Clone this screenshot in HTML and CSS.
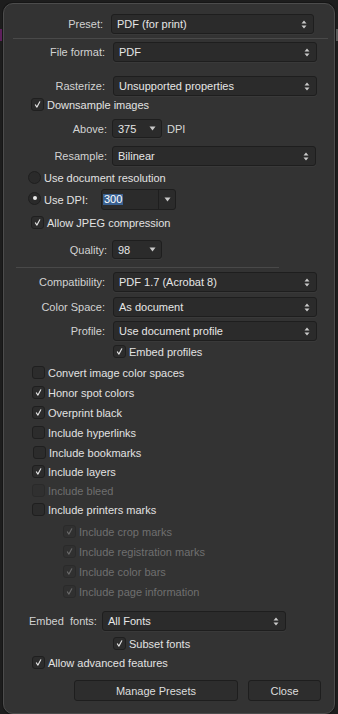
FILE: index.html
```html
<!DOCTYPE html>
<html>
<head>
<meta charset="utf-8">
<link rel="stylesheet" href="styles.css">
</head>
<body>
<div class="panel">
  <div class="row r-preset">
    <span class="lbl lbl-preset">Preset:</span>
    <div class="select sel-preset"><span>PDF (for print)</span>
      <svg class="stepper" width="6" height="11" viewBox="0 0 6 11"><path d="M0.5 4.5 L3 1.5 L5.5 4.5Z M0.5 6.5 L3 9.5 L5.5 6.5Z"/></svg></div>
  </div>
  <div class="sep sep-top"></div>
  <div class="row mt3">
    <span class="lbl">File format:</span>
    <div class="select sel-wide"><span>PDF</span>
      <svg class="stepper" width="6" height="11" viewBox="0 0 6 11"><path d="M0.5 4.5 L3 1.5 L5.5 4.5Z M0.5 6.5 L3 9.5 L5.5 6.5Z"/></svg></div>
  </div>
  <div class="row mt14">
    <span class="lbl">Rasterize:</span>
    <div class="select sel-wide"><span>Unsupported properties</span>
      <svg class="stepper" width="6" height="11" viewBox="0 0 6 11"><path d="M0.5 4.5 L3 1.5 L5.5 4.5Z M0.5 6.5 L3 9.5 L5.5 6.5Z"/></svg></div>
  </div>
  <div class="check mt2 ind-a">
    <span class="box on"><svg viewBox="0 0 13 13"><polyline points="4,7 5.8,9.6 9.2,3.2"/></svg></span>
    <span>Downsample images</span>
  </div>
  <div class="row mt8 h19">
    <span class="lbl lbl-b">Above:</span>
    <div class="select sel-small"><span>375</span>
      <svg class="down" width="7" height="5" viewBox="0 0 7 5"><path d="M0.5 0.5 H6.5 L3.5 4.5Z"/></svg></div>
    <span class="unit">DPI</span>
  </div>
  <div class="row mt8">
    <span class="lbl lbl-b">Resample:</span>
    <div class="select sel-wide"><span>Bilinear</span>
      <svg class="stepper" width="6" height="11" viewBox="0 0 6 11"><path d="M0.5 4.5 L3 1.5 L5.5 4.5Z M0.5 6.5 L3 9.5 L5.5 6.5Z"/></svg></div>
  </div>
  <div class="check mt5 ind-r">
    <span class="radio"></span>
    <span>Use document resolution</span>
  </div>
  <div class="row mt5 h21 ind-r">
    <span class="radio on"></span>
    <span class="dpi-lbl">Use DPI:</span>
    <div class="combo">
      <div class="combo-text"><span class="sel">300</span></div>
      <div class="combo-btn"><svg width="7" height="5" viewBox="0 0 7 5"><path d="M0.5 0.5 H6.5 L3.5 4.5Z"/></svg></div>
    </div>
  </div>
  <div class="check mt6 ind-a">
    <span class="box on"><svg viewBox="0 0 13 13"><polyline points="4,7 5.8,9.6 9.2,3.2"/></svg></span>
    <span>Allow JPEG compression</span>
  </div>
  <div class="row mt11 h19">
    <span class="lbl lbl-b">Quality:</span>
    <div class="select sel-small"><span>98</span>
      <svg class="down" width="7" height="5" viewBox="0 0 7 5"><path d="M0.5 0.5 H6.5 L3.5 4.5Z"/></svg></div>
  </div>
  <div class="sep sep-mid"></div>
  <div class="row mt4">
    <span class="lbl">Compatibility:</span>
    <div class="select sel-wide"><span>PDF 1.7 (Acrobat 8)</span>
      <svg class="stepper" width="6" height="11" viewBox="0 0 6 11"><path d="M0.5 4.5 L3 1.5 L5.5 4.5Z M0.5 6.5 L3 9.5 L5.5 6.5Z"/></svg></div>
  </div>
  <div class="row mt5">
    <span class="lbl">Color Space:</span>
    <div class="select sel-wide"><span>As document</span>
      <svg class="stepper" width="6" height="11" viewBox="0 0 6 11"><path d="M0.5 4.5 L3 1.5 L5.5 4.5Z M0.5 6.5 L3 9.5 L5.5 6.5Z"/></svg></div>
  </div>
  <div class="row mt4">
    <span class="lbl">Profile:</span>
    <div class="select sel-wide"><span>Use document profile</span>
      <svg class="stepper" width="6" height="11" viewBox="0 0 6 11"><path d="M0.5 4.5 L3 1.5 L5.5 4.5Z M0.5 6.5 L3 9.5 L5.5 6.5Z"/></svg></div>
  </div>
  <div class="check mt4 ind-c">
    <span class="box on"><svg viewBox="0 0 13 13"><polyline points="4,7 5.8,9.6 9.2,3.2"/></svg></span>
    <span>Embed profiles</span>
  </div>

  <div class="check mt8 ind-m"><span class="box"></span><span>Convert image color spaces</span></div>
  <div class="check mt7 ind-m"><span class="box on"><svg viewBox="0 0 13 13"><polyline points="4,7 5.8,9.6 9.2,3.2"/></svg></span><span>Honor spot colors</span></div>
  <div class="check mt7 ind-m"><span class="box on"><svg viewBox="0 0 13 13"><polyline points="4,7 5.8,9.6 9.2,3.2"/></svg></span><span>Overprint black</span></div>
  <div class="check mt7 ind-m"><span class="box"></span><span>Include hyperlinks</span></div>
  <div class="check mt7 ind-m bm"><span class="box"></span><span>Include bookmarks</span></div>
  <div class="check mt6 ind-m"><span class="box on"><svg viewBox="0 0 13 13"><polyline points="4,7 5.8,9.6 9.2,3.2"/></svg></span><span>Include layers</span></div>
  <div class="check mt6 ind-m off"><span class="box"></span><span>Include bleed</span></div>
  <div class="check mt6 ind-m"><span class="box"></span><span>Include printers marks</span></div>
  <div class="check mt9 ind-s off"><span class="box on"><svg viewBox="0 0 13 13"><polyline points="4,7 5.8,9.6 9.2,3.2"/></svg></span><span>Include crop marks</span></div>
  <div class="check mt7 ind-s off"><span class="box on"><svg viewBox="0 0 13 13"><polyline points="4,7 5.8,9.6 9.2,3.2"/></svg></span><span>Include registration marks</span></div>
  <div class="check mt7 ind-s off"><span class="box on"><svg viewBox="0 0 13 13"><polyline points="4,7 5.8,9.6 9.2,3.2"/></svg></span><span>Include color bars</span></div>
  <div class="check mt7 ind-s off"><span class="box on"><svg viewBox="0 0 13 13"><polyline points="4,7 5.8,9.6 9.2,3.2"/></svg></span><span>Include page information</span></div>

  <div class="row mt13 ind-f">
    <span class="font-lbl">Embed&nbsp; fonts:</span>
    <div class="select sel-font"><span>All Fonts</span>
      <svg class="stepper" width="6" height="11" viewBox="0 0 6 11"><path d="M0.5 4.5 L3 1.5 L5.5 4.5Z M0.5 6.5 L3 9.5 L5.5 6.5Z"/></svg></div>
  </div>
  <div class="check mt6 ind-c">
    <span class="box on"><svg viewBox="0 0 13 13"><polyline points="4,7 5.8,9.6 9.2,3.2"/></svg></span>
    <span>Subset fonts</span>
  </div>
  <div class="check mt6 ind-m">
    <span class="box on"><svg viewBox="0 0 13 13"><polyline points="4,7 5.8,9.6 9.2,3.2"/></svg></span>
    <span>Allow advanced features</span>
  </div>
  <div class="buttons mt11">
    <div class="btn btn-manage">Manage Presets</div>
    <div class="btn btn-close">Close</div>
  </div>
</div>
</body>
</html>
```
FILE: styles.css
```css
html, body {
  margin: 0;
  padding: 0;
}
body {
  width: 338px;
  height: 714px;
  overflow: hidden;
  background-color: #1d1d1d;
  background-image:
    linear-gradient(#5e1f5c, #5e1f5c),
    linear-gradient(#5a5a5a, #5a5a5a);
  background-size: 2px 12px, 2px 12px;
  background-position: 0 29px, 336px 29px;
  background-repeat: no-repeat;
  font-family: "Liberation Sans", Arial, sans-serif;
  font-size: 11px;
  color: #dcdcdc;
}
.panel {
  margin: 3px 0 0 3px;
  width: 330px;
  height: 689px;
  padding: 10px 0 10px 0;
  background: #333333;
  border: 1px solid #4c4c4c;
  border-radius: 10px;
  box-shadow: 0 0 0 1px #161616;
  display: flex;
  flex-direction: column;
}
.row {
  display: flex;
  align-items: center;
  height: 20px;
  flex: none;
}
.h19 { height: 19px; }
.h21 { height: 21px; }
.mt2 { margin-top: 2px; }
.mt3 { margin-top: 3px; }
.mt4 { margin-top: 4px; }
.mt5 { margin-top: 5px; }
.mt6 { margin-top: 6px; }
.mt7 { margin-top: 7px; }
.mt8 { margin-top: 8px; }
.mt9 { margin-top: 9px; }
.mt11 { margin-top: 11px; }
.mt13 { margin-top: 13px; }
.mt14 { margin-top: 14px; }

.lbl {
  width: 101px;
  margin-right: 8px;
  text-align: right;
  color: #d2d2d2;
  white-space: nowrap;
}
.lbl-preset { width: 99px; }
.lbl-b { width: 103px; margin-right: 5px; }

.select {
  box-sizing: border-box;
  height: 100%;
  background: #2b2b2b;
  border: 1px solid #1e1e1e;
  border-radius: 3px;
  display: flex;
  align-items: center;
  justify-content: space-between;
  padding: 0 6px 0 5px;
  color: #e6e6e6;
  box-shadow: 0 1px 0 rgba(255,255,255,0.03);
}
.sel-preset { width: 203px; }
.sel-wide { width: 204px; }
.sel-small { width: 50px; padding-right: 5px; }
.sel-font { width: 184px; }
.stepper path, .down path, .combo-btn path {
  fill: #c9c9c9;
}
.stepper { margin-top: 0; }
.unit {
  margin-left: 5px;
  color: #d8d8d8;
}

.sep {
  height: 1px;
  background: #494949;
  flex: none;
}
.sep-top { margin: 4px 6px 0 9px; }
.sep-mid { margin: 8px 55px 0 12px; }

.check {
  display: flex;
  align-items: center;
  height: 13px;
  flex: none;
  gap: 3px;
  white-space: nowrap;
  color: #e2e2e2;
}
.ind-a { padding-left: 27px; }
.ind-m { padding-left: 28px; }
.bm { padding-left: 29px; }
.ind-c { padding-left: 109px; }
.ind-s { padding-left: 59px; }
.ind-r { padding-left: 24px; }
.ind-f { padding-left: 25px; }

.box {
  box-sizing: border-box;
  width: 13px;
  height: 13px;
  border: 1px solid #1f1f1f;
  background: #2c2c2c;
  border-radius: 3px;
  display: block;
  flex: none;
}
.box svg {
  display: block;
  width: 11px;
  height: 11px;
}
.box polyline {
  fill: none;
  stroke: #e4e4e4;
  stroke-width: 1.3;
  stroke-linecap: round;
  stroke-linejoin: round;
}
.off { color: #6f6f6f; }
.off .box {
  background: #303030;
  border-color: #2a2a2a;
}
.off .box polyline { stroke: #6a6a6a; }

.radio {
  box-sizing: border-box;
  width: 13px;
  height: 13px;
  border-radius: 50%;
  border: 1px solid #1f1f1f;
  background: #2a2a2a;
  flex: none;
  display: flex;
  align-items: center;
  justify-content: center;
}
.radio.on::after {
  content: "";
  width: 4px;
  height: 4px;
  border-radius: 50%;
  background: #e8e8e8;
}
.h21 .radio { margin-right: 3px; margin-top: -3px; }
.dpi-lbl {
  width: 57px;
  color: #e2e2e2;
}
.combo {
  box-sizing: border-box;
  width: 75px;
  height: 21px;
  display: flex;
  border: 1px solid #1e1e1e;
  border-radius: 3px;
  background: #2b2b2b;
}
.combo-text {
  flex: 1;
  display: flex;
  align-items: center;
  padding-left: 1px;
}
.sel {
  background: #3a6191;
  color: #ffffff;
  padding: 0 1px;
  line-height: 11px;
}
.combo-btn {
  width: 16px;
  border-left: 1px solid #1e1e1e;
  display: flex;
  align-items: center;
  justify-content: center;
}
.font-lbl {
  width: 73px;
  color: #d2d2d2;
  white-space: nowrap;
}

.buttons {
  display: flex;
  gap: 10px;
  padding-left: 70px;
  height: 21px;
  flex: none;
}
.btn {
  box-sizing: border-box;
  height: 21px;
  border: 1px solid #1e1e1e;
  border-radius: 3px;
  background: #2d2d2d;
  display: flex;
  align-items: center;
  justify-content: center;
  color: #dedede;
}
.btn-manage { width: 164px; }
.btn-close { width: 73px; }
```
